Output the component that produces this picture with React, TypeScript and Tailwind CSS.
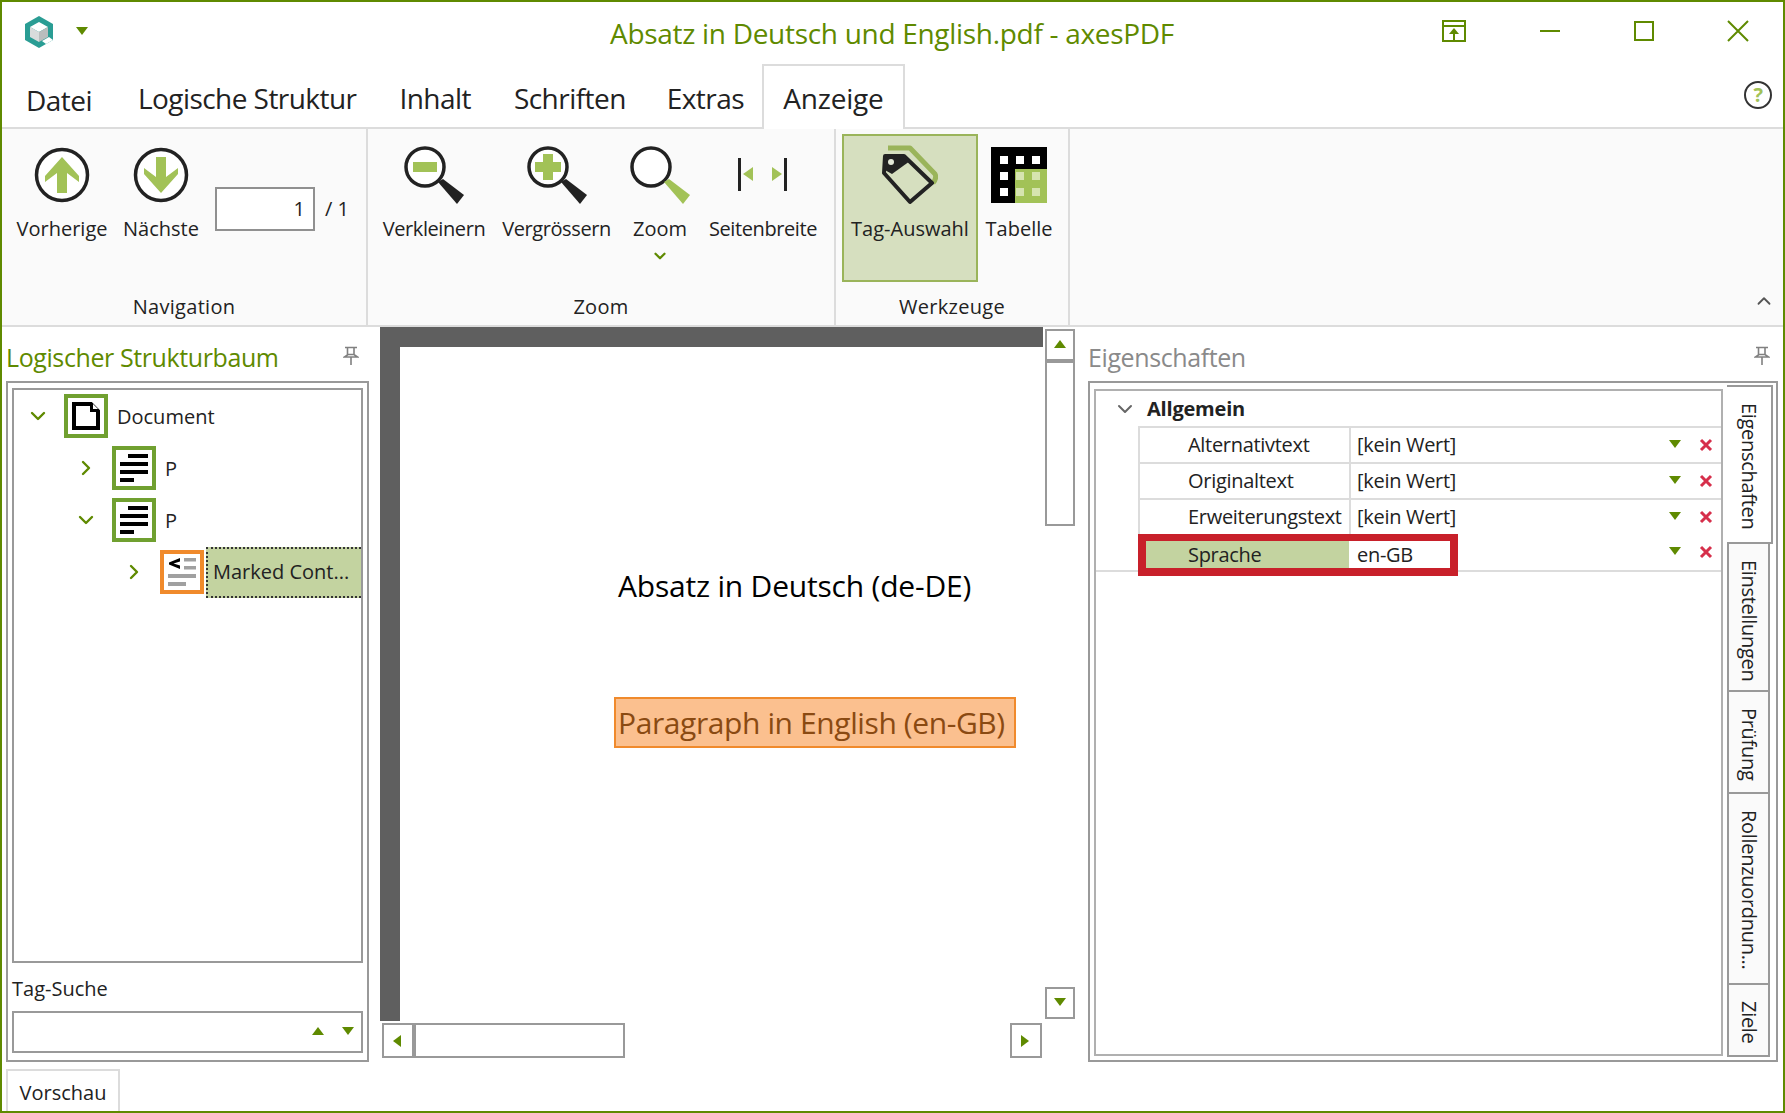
import { ChevronDown, ChevronRight, ChevronUp } from "lucide-react"

const green = "#5f8a00"

function Tri({ dir = "down", className = "" }: { dir?: "up" | "down" | "left" | "right"; className?: string }) {
    const pts = { up: "6,1 12,9 0,9", down: "0,1 12,1 6,9", left: "9,0 9,12 1,6", right: "1,0 1,12 9,6" }[dir]
    return (
        <svg width="12" height="12" viewBox="0 0 12 12" className={className}>
            <polygon points={pts} fill={green} />
        </svg>
    )
}

function Pin() {
    return (
        <svg width="16" height="20" viewBox="0 0 16 20" fill="none" stroke="#808080" strokeWidth="1.6">
            <path d="M2 1.5h12M4.5 1.5v7.5M11 1.5v7.5M1.5 11h13L11 8.5h-6zM8 11v8" />
        </svg>
    )
}

function NavArrow({ up }: { up?: boolean }) {
    return (
        <svg width="56" height="56" viewBox="0 0 56 56">
            <circle cx="28" cy="28" r="25.5" fill="#fff" stroke="#222" strokeWidth="3.5" />
            <path
                d={up ? "M28 10 L45 29 V35 L33 26 V46 H23 V26 L11 35 V29 Z" : "M28 46 L45 27 V21 L33 30 V10 H23 V30 L11 21 V27 Z"}
                fill="#a2c257"
            />
        </svg>
    )
}

function Magnifier({ kind }: { kind: "minus" | "plus" | "none" }) {
    const handle = kind === "none" ? "#a2c257" : "#222"
    return (
        <svg width="62" height="60" viewBox="0 0 62 60">
            <circle cx="22" cy="22" r="19" fill="#fff" stroke="#222" strokeWidth="3.5" />
            <path d="M35 37 L40 34 L61 50 L54 59 Z" fill={handle} />
            {kind === "minus" && <rect x="10" y="17" width="24" height="10" fill="#a2c257" />}
            {kind === "plus" && (
                <path d="M17 9h10v8h8v10h-8v8h-10v-8h-8v-10h8z" fill="#a2c257" />
            )}
        </svg>
    )
}

function PageWidth() {
    return (
        <svg width="52" height="34" viewBox="0 0 52 34">
            <rect x="1" y="0" width="3" height="33" fill="#222" />
            <rect x="47" y="0" width="3" height="33" fill="#222" />
            <polygon points="6,16 16,9 16,23" fill="#a2c257" />
            <polygon points="45,16 35,9 35,23" fill="#a2c257" />
        </svg>
    )
}

function TagIcon() {
    return (
        <svg width="56" height="60" viewBox="0 0 56 60" fill="none">
            <path d="M6 3 H28 L53 29 Q55 33 51 38" stroke="#9ab45a" strokeWidth="5" strokeLinejoin="round" />
            <path d="M3 11 H22 L50 38 L28 57 L2 28 Z" stroke="#222" strokeWidth="4" fill="#d6dfbf" strokeLinejoin="round" />
            <path d="M2 10 H23 L28 16 L10 29 L1 24 Z" fill="#222" />
            <circle cx="9" cy="17" r="3" fill="#e4e8d8" />
        </svg>
    )
}

function TableIcon() {
    const cells = [0, 1, 2]
    return (
        <svg width="56" height="56" viewBox="0 0 56 56">
            <rect width="56" height="56" fill="#000" />
            <rect x="24" y="22" width="32" height="34" fill="#a2c257" />
            {cells.map((r) =>
                cells.map((c) => (
                    <rect key={`${r}-${c}`} x={9 + c * 16} y={9 + r * 16} width="8" height="8" fill={r > 0 && c > 0 ? "#d6e4b0" : "#fff"} />
                ))
            )}
        </svg>
    )
}

function Logo() {
    return (
        <svg width="30" height="32" viewBox="0 0 30 32">
            <polygon points="15,0 29,8 29,24 15,32 1,24 1,8" fill="#2a9d94" />
            <polygon points="15,6 24,11 15,16 6,11" fill="#ffffff" />
            <polygon points="6,11 15,16 15,26 6,21" fill="#d9dcdc" />
            <polygon points="24,11 24,21 15,26 15,16" fill="#b9bdbd" />
            <polygon points="18,25 25,21 29,24 22,28" fill="#fff" />
        </svg>
    )
}

function RibbonButton({ label, width, children, tight }: { label: string; width: string; children: React.ReactNode; tight?: boolean }) {
    return (
        <div className={`${width} flex flex-col items-center`}>
            <div className="h-[60px] flex items-center justify-center">{children}</div>
            <span className={`mt-[10px] leading-[28px] whitespace-nowrap ${tight ? "tracking-[-0.4px]" : ""}`}>{label}</span>
        </div>
    )
}

function Section({ label, width, children }: { label: string; width: string; children: React.ReactNode }) {
    return (
        <div className={`${width} h-full flex flex-col border-r-2 border-[#dcdcdc]`}>
            <div className="h-[162px] flex">{children}</div>
            <div className="flex-1 text-center leading-[36px] tracking-[0.3px]">{label}</div>
        </div>
    )
}

function TreeIconP() {
    return (
        <div className="w-[44px] h-[44px] border-4 border-[#70a030] bg-white shrink-0">
            <svg width="36" height="36" viewBox="0 0 36 36">
                <path d="M12 4h20v4H12zM4 12h28v4H4zM4 20h28v4H4zM4 28h14v4H4z" fill="#000" />
            </svg>
        </div>
    )
}

function TreeRow({ level, open, label }: { level: number; open: boolean; label: string }) {
    return (
        <div className="h-[44px] mb-[8px] flex items-center" style={{ paddingLeft: level * 48 }}>
            <div className="w-[50px] pr-[2px] flex justify-center shrink-0">
                {open ? <ChevronDown size={24} color={green} strokeWidth={2.4} /> : <ChevronRight size={24} color={green} strokeWidth={2.4} />}
            </div>
            {label === "Document" ? (
                <div className="w-[44px] h-[44px] border-4 border-[#70a030] bg-white shrink-0">
                    <svg width="36" height="36" viewBox="0 0 36 36">
                        <path d="M6 6h17l7 7v17H6z" fill="#fff" stroke="#000" strokeWidth="4" />
                        <path d="M22 4l10 10H22z" fill="#000" />
                        <path d="M25 6l5 5h-5z" fill="#fff" />
                    </svg>
                </div>
            ) : (
                <TreeIconP />
            )}
            <span className="ml-[9px] mt-[1px]">{label}</span>
        </div>
    )
}

function PropRow({ name, value }: { name: string; value: string }) {
    return (
        <div className="ml-[42px] h-[36px] border-t-2 border-l-2 border-[#dcdcdc] flex items-center tracking-[-0.3px]">
            <div className="w-[211px] h-full border-r-2 border-[#dcdcdc] pl-[48px] flex items-center whitespace-nowrap">{name}</div>
            <div className="flex-1 pl-[6px]">{value}</div>
            <RowActions />
        </div>
    )
}

function RedX() {
    return (
        <svg width="14" height="14" viewBox="0 0 14 14" stroke="#d62f4b" strokeWidth="3">
            <path d="M2 2l10 10M12 2L2 12" />
        </svg>
    )
}

function RowActions() {
    return (
        <div className="flex items-center">
            <Tri dir="down" />
            <div className="ml-[18px] mr-[8px]">
                <RedX />
            </div>
        </div>
    )
}

function SideTab({ label, className }: { label: string; className: string }) {
    return (
        <div className={`${className} flex justify-start items-center pt-[16px] tracking-[-0.3px] [writing-mode:vertical-rl]`}>
            <span className="whitespace-nowrap">{label}</span>
        </div>
    )
}

export default function App() {
    return (
        <div className="w-[1785px] h-[1113px] border-2 border-[#5f8a00] bg-white flex flex-col overflow-hidden font-['Open_Sans','Noto_Sans',sans-serif] text-[20px] tracking-[0px] text-[#222]">
            {/* title */}
            <div className="h-[62px] flex items-center shrink-0">
                <div className="ml-[22px] w-[30px] h-[32px] mt-[-3px]">
                    <Logo />
                </div>
                <Tri dir="down" className="ml-[22px] mt-[-3px]" />
                <div className="flex-1 text-center text-[28px] tracking-[-0.3px] mt-[-1px] pl-[254px] text-[#5f8a00]">
                    Absatz in Deutsch und English.pdf - axesPDF
                </div>
                <div className="flex items-center mt-[-5px] mr-[34px]">
                    <svg width="24" height="22" viewBox="0 0 24 22" fill="none" stroke={green} strokeWidth="2">
                        <path d="M1 1h22v20H1zM1 6h22M12 21v-9" />
                        <path d="M12 8l5 6H7z" fill={green} stroke="none" />
                    </svg>
                    <div className="w-[20px] h-[2px] bg-[#5f8a00] ml-[74px]" />
                    <div className="w-[20px] h-[20px] border-2 border-[#5f8a00] ml-[74px]" />
                    <svg width="22" height="22" viewBox="0 0 22 22" stroke={green} strokeWidth="2" className="ml-[73px]">
                        <path d="M1 1l20 20M21 1L1 21" />
                    </svg>
                </div>
            </div>

            {/* tabs */}
            <div className="h-[65px] border-b-2 border-[#dcdcdc] flex text-[28px] tracking-[-0.55px] shrink-0 relative">
                <div className="ml-[24px] mt-[16px] leading-[40px]">Datei</div>
                <div className="ml-[46px] mt-[14px] leading-[40px]">Logische Struktur</div>
                <div className="ml-[43px] mt-[14px] leading-[40px]">Inhalt</div>
                <div className="ml-[43px] mt-[14px] leading-[40px]">Schriften</div>
                <div className="ml-[41px] mt-[14px] leading-[40px]">Extras</div>
                <div className="ml-[18px] w-[143px] h-[65px] border-2 border-b-0 border-[#dcdcdc] bg-white text-center pt-[12px] leading-[40px] tracking-[-0.2px]">Anzeige</div>
                <div className="ml-auto mr-[11px] mt-[17px] w-[28px] h-[28px] rounded-full border-2 border-[#333] flex items-center justify-center text-[20px] font-bold text-[#a2c257]">?</div>
            </div>

            {/* ribbon */}
            <div className="h-[198px] bg-[#fafafa] border-b-2 border-[#dcdcdc] flex shrink-0 relative">
                <Section label="Navigation" width="w-[366px]">
                    <div className="flex pt-[16px] pl-[9px]">
                        <RibbonButton label="Vorherige" width="w-[102px]"><NavArrow up /></RibbonButton>
                        <RibbonButton label="Nächste" width="w-[96px]"><NavArrow /></RibbonButton>
                        <div className="ml-[6px] mt-[42px] w-[100px] h-[44px] border-2 border-[#909090] bg-white text-right pr-[8px] leading-[40px]">1</div>
                        <div className="ml-[10px] mt-[42px] leading-[44px]">/ 1</div>
                    </div>
                </Section>
                <Section label="Zoom" width="w-[468px]">
                    <div className="flex pt-[16px] pl-[12px]">
                        <RibbonButton label="Verkleinern" width="w-[108px]" tight><Magnifier kind="minus" /></RibbonButton>
                        <RibbonButton label="Vergrössern" width="w-[137px]" tight><Magnifier kind="plus" /></RibbonButton>
                        <div className="w-[70px] flex flex-col items-center">
                            <div className="h-[60px]"><Magnifier kind="none" /></div>
                            <span className="mt-[10px] leading-[28px]">Zoom</span>
                            <ChevronDown size={18} color={green} strokeWidth={3} className="mt-[4px]" />
                        </div>
                        <RibbonButton label="Seitenbreite" width="w-[136px]" tight><PageWidth /></RibbonButton>
                    </div>
                </Section>
                <Section label="Werkzeuge" width="w-[234px]">
                    <div className="flex pl-[6px] pt-[5px]">
                        <div className="w-[136px] h-[148px] border-2 border-[#9ab45a] bg-[#d6dfbf] flex flex-col items-center pt-[9px]">
                            <div className="h-[60px]"><TagIcon /></div>
                            <span className="mt-[10px] leading-[28px] whitespace-nowrap">Tag-Auswahl</span>
                        </div>
                        <div className="ml-[8px] pt-[11px]">
                            <RibbonButton label="Tabelle" width="w-[66px]"><TableIcon /></RibbonButton>
                        </div>
                    </div>
                </Section>
                <ChevronUp size={22} color="#555" strokeWidth={2} className="absolute right-[8px] top-[161px]" />
            </div>

            {/* main */}
            <div className="flex-1 flex min-h-0">
                {/* left */}
                <div className="w-[378px] pl-[4px] shrink-0">
                    <div className="h-[54px] flex items-start">
                        <span className="text-[25px] mt-[14px] leading-[32px] tracking-[-0.4px] text-[#5f8a00]">Logischer Strukturbaum</span>
                        <div className="ml-auto mr-[21px] mt-[19px]"><Pin /></div>
                    </div>
                    <div className="w-[363px] h-[681px] border-2 border-[#999] flex flex-col pl-[4px] pr-[4px]">
                        <div className="mt-[5px] w-[351px] h-[575px] border-2 border-[#999] pt-[4px] shrink-0">
                            <TreeRow level={0} open label="Document" />
                            <TreeRow level={1} open={false} label="P" />
                            <TreeRow level={1} open label="P" />
                            <div className="h-[44px] flex items-center pl-[96px]">
                                <div className="w-[50px] pr-[2px] flex justify-center shrink-0">
                                    <ChevronRight size={24} color={green} strokeWidth={2.4} />
                                </div>
                                <div className="w-[44px] h-[44px] border-4 border-[#f08a2c] bg-white shrink-0">
                                    <svg width="36" height="36" viewBox="0 0 36 36">
                                        <path d="M16 4v3.5L9.5 9.5 16 11.5V15L5 10.5V8.5z" fill="#000" />
                                        <path d="M20 4h12v3.5H20zM20 12h12v3.5H20zM4 20h28v4H4zM4 28h18v4H4z" fill="#a0a0a0" />
                                    </svg>
                                </div>
                                <div className="ml-[2px] w-[155px] h-[51px] bg-[#c3d3a0] border-2 border-dotted border-[#333] border-r-0 pl-[5px] flex items-center whitespace-nowrap">Marked Cont...</div>
                            </div>
                        </div>
                        <div className="mt-[12px] leading-[28px]">Tag-Suche</div>
                        <div className="mt-[8px] w-[351px] h-[42px] border-2 border-[#999] flex items-center justify-end pr-[7px] bg-white">
                            <Tri dir="up" />
                            <Tri dir="down" className="ml-[18px]" />
                        </div>
                    </div>
                </div>

                {/* centre */}
                <div className="w-[695px] shrink-0 flex flex-col">
                    <div className="flex">
                        <div className="w-[663px] h-[694px] border-t-[20px] border-l-[20px] border-[#5f5f5f] bg-white flex flex-col">
                            <div className="ml-[218px] mt-[219px] leading-[40px] text-[30px] tracking-[-0.2px] text-black whitespace-nowrap">Absatz in Deutsch (de-DE)</div>
                            <div className="ml-[214px] mt-[91px] w-[402px] h-[51px] bg-[#fbc08f] border-2 border-[#f08a2c] flex items-center pl-[2px] text-[30px] tracking-[-0.4px] text-[#8a4a12] whitespace-nowrap">Paragraph in English (en-GB)</div>
                        </div>
                        <div className="w-[30px] ml-[2px] mt-[2px] h-[690px] flex flex-col justify-between">
                            <div className="w-[30px] h-[197px] border-2 border-[#999]">
                                <div className="h-[32px] border-b-[4px] border-[#999] flex items-center justify-center"><Tri dir="up" /></div>
                            </div>
                            <div className="w-[30px] h-[32px] border-2 border-[#999] flex items-center justify-center"><Tri dir="down" /></div>
                        </div>
                    </div>
                    <div className="flex mt-[2px] pl-[2px]">
                        <div className="w-[243px] h-[35px] border-2 border-[#999] flex">
                            <div className="w-[32px] border-r-[4px] border-[#999] flex items-center justify-center"><Tri dir="left" /></div>
                        </div>
                        <div className="w-[32px] h-[35px] ml-[385px] border-2 border-[#999] flex items-center justify-center"><Tri dir="right" /></div>
                    </div>
                </div>

                {/* right */}
                <div className="ml-[13px] w-[690px] shrink-0">
                    <div className="h-[54px] flex items-start">
                        <span className="text-[25px] mt-[14px] leading-[32px] tracking-[-0.4px] text-[#8a8a8a]">Eigenschaften</span>
                        <div className="ml-auto mr-[8px] mt-[19px]"><Pin /></div>
                    </div>
                    <div className="w-[690px] h-[681px] border-2 border-[#999] flex pl-[4px]">
                        <div className="mt-[6px] w-[629px] h-[667px] border-2 border-[#b0b0b0] shrink-0">
                            <div className="h-[35px] flex items-center font-bold">
                                <ChevronDown size={24} color="#666" strokeWidth={2} className="ml-[17px]" />
                                <span className="ml-[10px] tracking-[-0.2px]">Allgemein</span>
                            </div>
                            <PropRow name="Alternativtext" value="[kein Wert]" />
                            <PropRow name="Originaltext" value="[kein Wert]" />
                            <PropRow name="Erweiterungstext" value="[kein Wert]" />
                            <div className="ml-[42px] h-[36px] flex items-start tracking-[-0.3px]">
                                <div className="relative z-10 w-[320px] h-[42px] border-x-[8px] border-t-[7px] border-b-[8px] border-[#c8202a] flex bg-white">
                                    <div className="w-[203px] h-full bg-[#c3d3a0] pl-[42px] flex items-center">Sprache</div>
                                    <div className="pl-[8px] flex items-center">en-GB</div>
                                </div>
                                <div className="ml-auto mt-[11px]"><RowActions /></div>
                            </div>
                            <div className="h-[2px] bg-[#dcdcdc]" />
                        </div>
                        <div className="ml-[4px] mt-[2px] w-[46px] flex flex-col text-[#222]">
                            <SideTab label="Eigenschaften" className="w-[46px] h-[159px] border-2 border-l-0 border-[#999] bg-white" />
                            <SideTab label="Einstellungen" className="w-[43px] h-[148px] border-2 border-t-0 border-[#999] bg-[#fafafa]" />
                            <SideTab label="Prüfung" className="w-[43px] h-[102px] border-2 border-t-0 border-[#999] bg-[#fafafa]" />
                            <SideTab label="Rollenzuordnun..." className="w-[43px] h-[191px] border-2 border-t-0 border-[#999] bg-[#fafafa]" />
                            <SideTab label="Ziele" className="w-[43px] h-[72px] border-2 border-t-0 border-[#999] bg-[#fafafa]" />
                        </div>
                    </div>
                </div>
            </div>

            {/* bottom */}
            <div className="h-[42px] pl-[4px] shrink-0">
                <div className="w-[114px] h-[42px] border-2 border-b-0 border-[#dcdcdc] text-center leading-[44px]">Vorschau</div>
            </div>
        </div>
    )
}
